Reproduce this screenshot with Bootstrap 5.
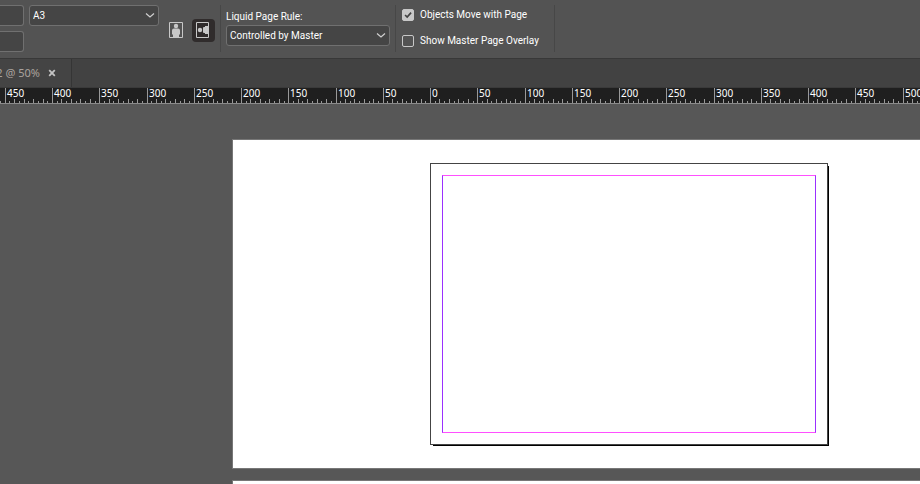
<!DOCTYPE html>
<html lang="en">
<head>
<meta charset="utf-8">
<meta name="viewport" content="width=device-width, initial-scale=1">
<title>Page layout editor</title>
<link href="https://cdn.jsdelivr.net/npm/bootstrap@5.3.0/dist/css/bootstrap.min.css" rel="stylesheet">
<style>
body{background:#575757;color:#fff;font:10px/16px Roboto,"Open Sans",sans-serif}
.options-bar{background:#535353;border-bottom:1px solid #383838;padding:5px 0 6px}
.field,.field:focus{background-color:#454545;border:1px solid #707070;border-radius:3px;color:#fff;font-size:10px;line-height:16px;height:21px;min-height:0;box-shadow:none}
.field.form-select{padding:1px 20px 1px 3px;background-image:none;width:100%}
.field-clipped{width:24px;border-left:0;border-radius:0 3px 3px 0;padding:1px 2px}
.stack{gap:5px}
.preset{width:130px;margin-left:5px}
.rule{width:164px}
.chev{position:absolute;right:4px;top:7px;pointer-events:none}
.orient{margin:14px 5px 0 6px;gap:4px}
.orient-btn{width:23px;height:23px;border:0;border-radius:4px;background:transparent;padding:0}
.orient-btn.active{background:#302c2c}
.group{border-left:1px solid #474747;padding-left:5px;height:47px}
.rule-group{padding-right:5px}
.rule-group label{margin-top:4px;line-height:16px}
.check-group{padding:2px 15px 0 6px;gap:10px;border-right:1px solid #474747}
.check-group .form-check-input{width:12px;height:12px;margin:0;border:1px solid #c8c8c8;border-radius:2px;background-color:transparent;box-shadow:none}
.check-group .form-check-input:checked{background-color:#c8c8c8;background-image:url("data:image/svg+xml,%3Csvg xmlns='http://www.w3.org/2000/svg' viewBox='0 0 12 12'%3E%3Cpath fill='none' stroke='%23424242' stroke-width='2' d='M2.5 6 5 8.5 9.7 3.2'/%3E%3C/svg%3E")}
.check-row{gap:6px}
.tab-strip{background:#424242;height:29px;border-bottom:1px solid #3a3a3a}
.doc-tab{width:72px;border-right:1px solid #353535;background:#444;color:#aaa39e;padding-right:15px;gap:8px;font-family:"Noto Sans",sans-serif;font-size:11px}
.doc-tab button{border:0;background:transparent;padding:0;width:8px;height:16px;line-height:0}
.ruler{background:#1f1f1f;height:16px;border-bottom:1px solid #8b8b8b}
.ruler svg{width:100%;height:15px;display:block;overflow:visible}
.ruler line{stroke:#999;shape-rendering:crispEdges}
.ruler text{fill:#fff;font-family:"Noto Sans",sans-serif;font-size:10px}
.workspace{padding:35px 0 0 232px;gap:11px;min-height:0}
.spread{background:#fff;border:1px solid #777;border-right:0;padding:23px 0 23px 197px}
.next-spread{background:#fff;border:1px solid #777;border-width:1px 0 0 1px}
.sheet{width:398px;height:282px;border:1px solid #444;box-shadow:2px 2px 0 -1px #000;padding:11px}
.margins{border:1px solid #ff4fff;border-left-color:#9a30ff;border-right-color:#9a30ff}
</style>
<script src="https://cdn.jsdelivr.net/npm/bootstrap@5.3.0/dist/js/bootstrap.bundle.min.js"></script>
</head>
<body class="d-flex flex-column overflow-hidden vh-100">
<header class="options-bar d-flex align-items-start">
  <div class="stack d-flex flex-column">
    <input class="form-control field field-clipped" type="text" aria-label="Page width">
    <input class="form-control field field-clipped" type="text" aria-label="Page height">
  </div>
  <div class="preset position-relative">
    <select class="form-select field" aria-label="Page size"><option>A3</option></select>
    <svg class="chev" width="10" height="7" viewBox="0 0 10 7"><path d="M1 1.5 5 5l4-3.5" fill="none" stroke="#d0d0d0" stroke-width="1.2"/></svg>
  </div>
  <div class="orient d-flex">
    <button class="orient-btn" type="button" aria-label="Portrait">
      <svg width="23" height="23" viewBox="0 0 23 23"><path d="M4.500 3.500h13v15h-13z" fill="none" stroke="#c8c8c8"/><circle cx="11" cy="7" r="2.200" fill="#c8c8c8"/><path d="M9 9.500h4q2 0 2 2v4h-1v2.500H8v-2.500H7v-4q0-2 2-2z" fill="#c8c8c8"/></svg>
    </button>
    <button class="orient-btn active" type="button" aria-label="Landscape">
      <svg width="23" height="23" viewBox="0 0 23 23"><path d="M4.500 3.500h12v15h-12z" fill="none" stroke="#c8c8c8"/><circle cx="8" cy="11" r="2.200" fill="#c8c8c8"/><path d="M17 7h-4v1h-1q-1 0-1 1v4q0 1 1 1h1v1h4z" fill="#c8c8c8"/></svg>
    </button>
  </div>
  <div class="group rule-group d-flex flex-column">
    <label for="rule">Liquid Page Rule:</label>
    <div class="rule position-relative">
      <select class="form-select field" id="rule"><option>Controlled by Master</option></select>
      <svg class="chev" width="10" height="7" viewBox="0 0 10 7"><path d="M1 1.5 5 5l4-3.5" fill="none" stroke="#d0d0d0" stroke-width="1.2"/></svg>
    </div>
  </div>
  <div class="group check-group d-flex flex-column">
    <div class="check-row d-flex align-items-center"><input class="form-check-input" type="checkbox" id="move" checked><label for="move">Objects Move with Page</label></div>
    <div class="check-row d-flex align-items-center"><input class="form-check-input" type="checkbox" id="overlay"><label for="overlay">Show Master Page Overlay</label></div>
  </div>
</header>
<nav class="tab-strip d-flex" aria-label="Open documents">
  <div class="doc-tab d-flex align-items-center justify-content-end overflow-hidden text-nowrap">
    <span>2 @ 50%</span>
    <button type="button" aria-label="Close document"><svg width="8" height="8" viewBox="0 0 8 8"><path d="m1.2 1.2 5.6 5.6m0-5.6L1.2 6.8" stroke="#c4c4c4" stroke-width="1.8"/></svg></button>
  </div>
</nav>
<div class="ruler"><svg id="ruler" aria-label="Horizontal ruler"></svg></div>
<main class="workspace d-flex flex-column flex-fill overflow-hidden">
  <section class="spread flex-shrink-0"><div class="sheet d-flex"><div class="margins flex-fill"></div></div></section>
  <section class="next-spread flex-fill"></section>
</main>
<script>
const ruler = document.getElementById('ruler');
const origin = 430, step = 47.25;
const add = (name, attrs, text) => {
  const el = document.createElementNS('http://www.w3.org/2000/svg', name);
  for (const key in attrs) el.setAttribute(key, attrs[key]);
  if (text !== undefined) el.textContent = text;
  ruler.append(el);
};
for (let i = -91; origin + i * step / 10 < ruler.clientWidth; i++) {
  const x = Math.round(origin + i * step / 10) + 0.5;
  const major = i % 10 === 0;
  add('line', {x1: x, x2: x, y1: major ? 0 : i % 2 ? 13 : 11, y2: 15});
  if (major) add('text', {x: Math.floor(x) + 2, y: 9}, Math.abs(i) * 5);
}
</script>
</body>
</html>
